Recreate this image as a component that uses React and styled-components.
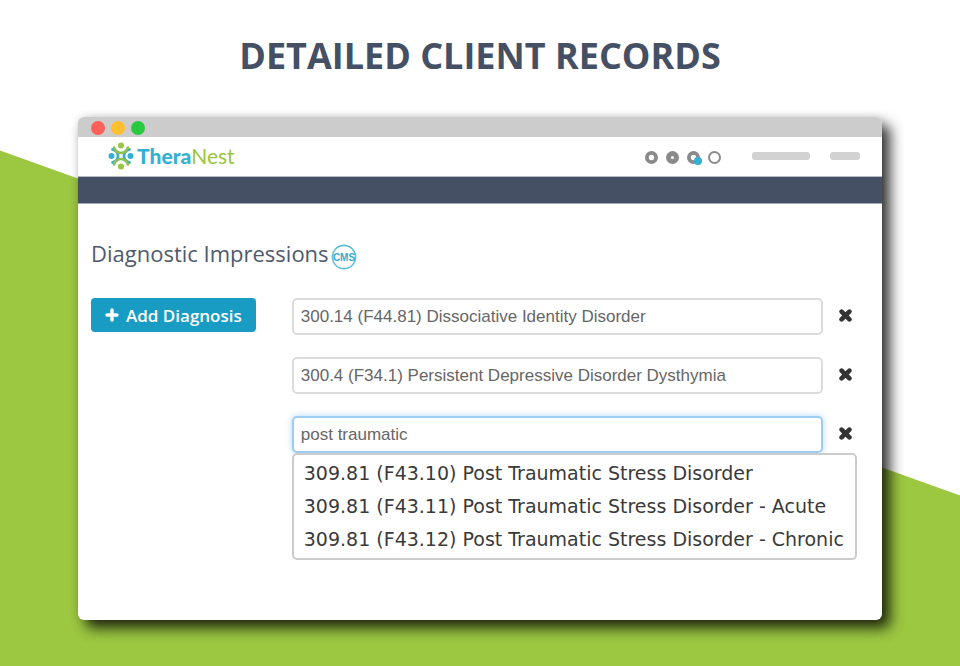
import React, { useState } from 'react';
import styled, { createGlobalStyle } from 'styled-components';

const GlobalStyle = createGlobalStyle`
  * {
    box-sizing: border-box;
  }

  body {
    margin: 0;
    background: #fff;
    font-family: 'Open Sans', sans-serif;
  }
`;

const Page = styled.main`
  position: relative;
  z-index: 0;
  min-height: 100vh;
  padding: 28px 78px 46px;

  &::before {
    content: '';
    position: absolute;
    inset: 0;
    z-index: -1;
    background: #9cc741;
    clip-path: polygon(0 22.6%, 100% 74.4%, 100% 100%, 0 100%);
  }
`;

const Title = styled.h1`
  margin: 0 0 33px;
  color: #455064;
  font-size: 36px;
  font-weight: 700;
  line-height: 56px;
  text-align: center;
  text-transform: uppercase;
`;

const Browser = styled.section`
  background: #fff;
  border-radius: 6px;
  box-shadow: 8px 8px 14px rgba(0, 0, 0, 0.8), 0 0 8px rgba(0, 0, 0, 0.12);
`;

const TitleBar = styled.div`
  display: flex;
  align-items: center;
  gap: 6px;
  height: 20px;
  padding: 2px 13px 0;
  background: #ccc;
  border-radius: 6px 6px 0 0;
`;

const Dot = styled.span`
  width: 14px;
  height: 14px;
  border-radius: 50%;
  background: ${(props) => props.color};
`;

const Header = styled.header`
  display: flex;
  align-items: center;
  justify-content: space-between;
  height: 40px;
  padding: 0 22px 2px 30px;
  border-bottom: 1px solid #b5bac2;
`;

const Logo = styled.a`
  display: flex;
  align-items: center;
  gap: 3px;
  color: #9bc53f;
  font-family: Lato, sans-serif;
  font-size: 21px;
  line-height: 24px;
  text-decoration: none;

  strong {
    color: #35b0d3;
    font-weight: 900;
  }
`;

const Tools = styled.div`
  display: flex;
  align-items: center;
  gap: 20px;
`;

const Rings = styled.svg`
  margin-right: 10px;
`;

const Bar = styled.span`
  width: ${(props) => props.$width}px;
  height: 8px;
  border-radius: 3px;
  background: #d2d2d2;
`;

const NavBar = styled.nav`
  height: 27px;
  background: #455064;
  border-bottom: 1px solid #a5abb5;
`;

const Content = styled.div`
  padding: 32px 25px 60px 13px;
`;

const Heading = styled.h2`
  display: flex;
  align-items: flex-end;
  gap: 2px;
  margin: 0 0 28px;
  color: #4f5a6d;
  font-size: 22px;
  font-weight: 400;
  line-height: 34px;
`;

const Columns = styled.div`
  display: flex;
  align-items: flex-start;
  gap: 36px;
`;

const AddButton = styled.button`
  display: flex;
  flex: none;
  align-items: center;
  gap: 7px;
  height: 34px;
  padding: 0 14px;
  border: 0;
  border-radius: 4px;
  background: #199cc3;
  color: #fff;
  font-family: inherit;
  font-size: 17px;
  font-weight: 600;
  cursor: pointer;
`;

const Fields = styled.div`
  display: flex;
  flex: 1;
  flex-direction: column;
  gap: 22px;
`;

const Row = styled.div`
  display: flex;
  align-items: center;
  gap: 16px;
`;

const DiagnosisInput = styled.input`
  flex: 1;
  min-width: 0;
  height: 37px;
  padding: 0 7px;
  border: 2px solid ${(props) => (props.$active ? '#9dcdf2' : '#dcdcdc')};
  border-radius: 5px;
  box-shadow: ${(props) => (props.$active ? '0 0 6px rgba(102, 175, 233, 0.5)' : 'none')};
  background: #fff;
  color: #666;
  font-family: 'Liberation Sans', Arial, sans-serif;
  font-size: 17px;
  outline: none;
`;

const RemoveButton = styled.button`
  display: flex;
  margin-right: 5px;
  padding: 0 0 3px;
  border: 0;
  background: none;
  color: #333;
  cursor: pointer;
`;

const Suggestions = styled.ul`
  margin: -22px 0 0;
  padding: 2px 10px;
  border: 2px solid #ccc;
  border-radius: 5px;
  background: #fff;
  color: #3a3a3a;
  font-family: 'DejaVu Sans', Verdana, sans-serif;
  font-size: 19px;
  line-height: 33px;
  list-style: none;
  white-space: nowrap;
`;

const LogoMark = () => (
  <svg width="26" height="28" viewBox="0 0 26 28" aria-hidden="true">
    <g fill="none" stroke="#3aafc4" strokeWidth="2.8" strokeLinecap="round">
      <path d="M4.5 7.5Q10 9 10 14T4.5 20.5" />
      <path d="M21.5 7.5Q16 9 16 14T21.5 20.5" />
    </g>
    <g fill="none" stroke="#8fbf4d" strokeWidth="2.6" strokeLinecap="round">
      <path d="M6 5.5Q8 11 13 11T20 5.5" />
      <path d="M6 22.5Q8 17 13 17T20 22.5" />
    </g>
    <circle cx="13" cy="3.5" r="3" fill="#9bc53f" />
    <circle cx="13" cy="24.5" r="3" fill="#9bc53f" />
    <circle cx="3.5" cy="14" r="3" fill="#35b0d3" />
    <circle cx="22.5" cy="14" r="3" fill="#35b0d3" />
  </svg>
);

const CmsBadge = () => (
  <svg width="26" height="26" viewBox="0 0 26 26" role="img" aria-label="CMS">
    <circle cx="13" cy="13" r="11.6" fill="#fff" stroke="#5fc0da" strokeWidth="1.6" />
    <text
      x="13"
      y="17"
      fill="#35a9cc"
      fontFamily="Liberation Sans, sans-serif"
      fontSize="10"
      fontWeight="700"
      textAnchor="middle"
    >
      CMS
    </text>
  </svg>
);

const CrossIcon = () => (
  <svg width="13" height="13" viewBox="0 0 13 13" aria-hidden="true">
    <path
      d="M2.6 2.6L10.4 10.4M10.4 2.6L2.6 10.4"
      stroke="currentColor"
      strokeWidth="4.6"
      strokeLinecap="round"
    />
  </svg>
);

const PlusIcon = () => (
  <svg width="14" height="14" viewBox="0 0 14 14" aria-hidden="true">
    <path d="M7 2V12M2 7H12" stroke="currentColor" strokeWidth="3.4" strokeLinecap="round" />
  </svg>
);

const options = [
  '309.81 (F43.10) Post Traumatic Stress Disorder',
  '309.81 (F43.11) Post Traumatic Stress Disorder - Acute',
  '309.81 (F43.12) Post Traumatic Stress Disorder - Chronic',
];

const App = () => {
  const [diagnoses, setDiagnoses] = useState([
    '300.14 (F44.81) Dissociative Identity Disorder',
    '300.4 (F34.1) Persistent Depressive Disorder Dysthymia',
    'post traumatic',
  ]);

  const handleChange = (index, value) => {
    setDiagnoses(diagnoses.map((item, i) => (i === index ? value : item)));
  };

  return (
    <>
      <GlobalStyle />
      <Page>
        <Title>Detailed Client Records</Title>
        <Browser>
          <TitleBar>
            <Dot color="#ff6057" />
            <Dot color="#ffc02f" />
            <Dot color="#28cb40" />
          </TitleBar>
          <Header>
            <Logo href="#">
              <LogoMark />
              <span>
                <strong>Thera</strong>Nest
              </span>
            </Logo>
            <Tools>
              <Rings width="78" height="18" viewBox="0 0 78 18" aria-hidden="true">
                <g fill="none" stroke="#8a8a8a">
                  <circle cx="7.5" cy="10.5" r="4.6" strokeWidth="3.8" />
                  <circle cx="28.5" cy="10.5" r="4" strokeWidth="5" />
                  <circle cx="49.5" cy="10.5" r="4.6" strokeWidth="3.8" />
                  <circle cx="70.5" cy="10.5" r="5.5" strokeWidth="2" />
                </g>
                <circle cx="54" cy="14" r="4" fill="#35b0d3" />
              </Rings>
              <Bar $width={58} />
              <Bar $width={30} />
            </Tools>
          </Header>
          <NavBar />
          <Content>
            <Heading>
              Diagnostic Impressions
              <CmsBadge />
            </Heading>
            <Columns>
              <AddButton type="button">
                <PlusIcon />
                Add Diagnosis
              </AddButton>
              <Fields>
                {diagnoses.map((item, index) => (
                  <Row key={index}>
                    <DiagnosisInput
                      type="text"
                      aria-label={`Diagnosis ${index + 1}`}
                      value={item}
                      $active={index === 2}
                      onChange={(e) => handleChange(index, e.target.value)}
                    />
                    <RemoveButton type="button" aria-label="Remove diagnosis">
                      <CrossIcon />
                    </RemoveButton>
                  </Row>
                ))}
                <Suggestions>
                  {options.map((option) => (
                    <li key={option}>{option}</li>
                  ))}
                </Suggestions>
              </Fields>
            </Columns>
          </Content>
        </Browser>
      </Page>
    </>
  );
};

export default App;
